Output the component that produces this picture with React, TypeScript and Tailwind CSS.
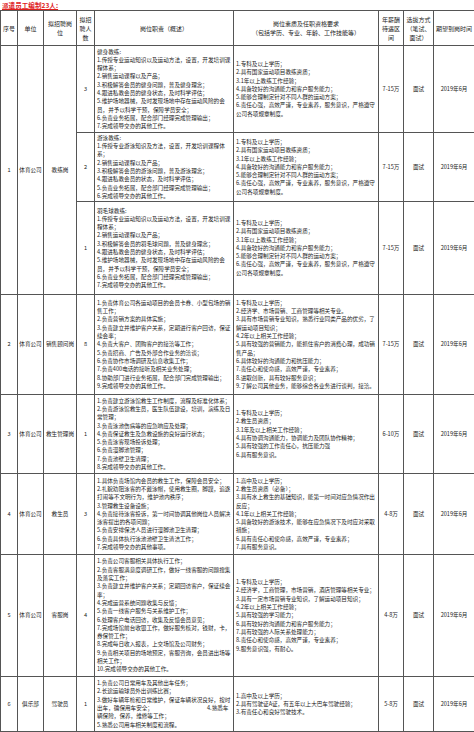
const coachReq = [
  '1.专科及以上学历；',
  '2.具有国家运动项目教练资质；',
  '3.1年以上教练工作经验；',
  '4.具备较好的沟通能力和客户服务能力；',
  '5.能够合理制定针对不同人群的运动方案；',
  '6.责任心强，高效严谨，专业素养，服务意识，严格遵守公司各项规章制度。',
];

const coaches = [
  {
    count: '3',
    h: 'h-[87px]',
    duty: [
      '健身教练:',
      '1.传授专业运动知识以及运动方法，设置，开发培训课程体系；',
      '2.销售运动课程以及产品；',
      '3.积极解答会员的健身问题，普及健身理念；',
      '4.跟进私教会员的健身状态，及时科学评估；',
      '5.维护场地器械，及时发现场地中存在运动风险的会员，并予以科学干预，保障学员安全；',
      '6.负责业务拓展，配合部门经理完成管理输出；',
      '7.完成领导交办的其他工作。',
    ],
  },
  {
    count: '2',
    h: 'h-[69px]',
    duty: [
      '游泳教练:',
      '1.传授专业游泳知识及方法，设置，开发培训课程体系；',
      '2.销售运动课程以及产品；',
      '3.积极解答会员的游泳问题，普及游泳理念；',
      '4.跟进私教会员的状态，及时科学评估；',
      '5.负责业务拓展，配合部门经理完成管理输出；',
      '6.完成领导交办的其他工作。',
    ],
  },
  {
    count: '1',
    h: 'h-[93px]',
    duty: [
      '羽毛球教练:',
      '1.传授专业运动知识以及运动方法，设置，开发培训课程体系；',
      '2.销售运动课程以及产品；',
      '3.积极解答会员的羽毛球问题，普及健身理念；',
      '4.跟进私教会员的健身状态，及时科学评估；',
      '5.维护场地器械，及时发现场地中存在运动风险的会员，并予以科学干预，保障学员安全；',
      '6.负责业务拓展，配合部门经理完成管理输出；',
      '7.完成领导交办的其他工作。',
    ],
  },
];

const jobs = [
  {
    no: '2', unit: '体育公司', post: '销售顾问岗', count: '8', pay: '7-15万', h: 'h-[100px]',
    duty: [
      '1.负责体育公司各运动项目的会员卡券、小型包场的销售工作；',
      '2.负责营销方案的具体实施；',
      '3.负责建立并维护客户关系，定期进行客户回访，保证续会率；',
      '4.负责大客户、团购客户的接洽等工作；',
      '5.负责招商、广告及外部合作业务的洽谈；',
      '6.负责协作市场调研及信息收集工作；',
      '7.负责400电话的接听及相关业务处理；',
      '8.协助部门进行业务拓展，配合部门完成管理输出；',
      '9.完成领导交办的其他工作。',
    ],
    req: [
      '1.专科及以上学历；',
      '2.经济学、市场营销、工商管理等相关专业。',
      '3.具有市场营销专业知识，熟悉行业同类产品的优劣，了解运动项目知识；',
      '4.2年以上相关工作经验；',
      '5.具有较强的营销能力，能抓住客户的消费心理，成功销售产品；',
      '6.具体较好的沟通能力和抗压能力；',
      '7.责任心和使命感，高效严谨，专业素养；',
      '8.进取创新，具有较好服务意识；',
      '9.了解公司其他业务，能够综合各业务进行谈判，接洽。',
    ],
  },
  {
    no: '3', unit: '体育公司', post: '救生管理岗', count: '1', pay: '6-10万', h: 'h-[79px]',
    duty: [
      '1.负责建立游泳馆救生工作制度，流程及标准化体系；',
      '2.负责游泳馆救生员，医生队伍建设，培训，演练及日常管理；',
      '3.负责泳池伤病等的应急响应及处理；',
      '4.负责保证救生及急救设施的良好运行状态；',
      '5.负责泳客现场投诉处理；',
      '6.负责漫脚池管理；',
      '7.负责池壁卫生清理；',
      '8.完成领导交办的其他工作。',
    ],
    req: [
      '1.专科及以上学历；',
      '2.救生员资质；',
      '3.1年及以上相关工作经验；',
      '4.具有协调沟通能力，协调能力及团队协作精神；',
      '5.具有较强的工作责任心，抗压能力强',
      '6.具有服务意识。',
    ],
  },
  {
    no: '4', unit: '体育公司', post: '救生员', count: '3', pay: '4-8万', h: 'h-[81px]',
    duty: [
      '1.具体负责场馆内会员的救生工作，保障会员安全；',
      '2.礼貌劝阻泳客的不戴泳帽，使用救生圈，脚蹼，追逐打闹等不文明行为，维护池内秩序；',
      '3.管理救生设备设施；',
      '4.负责接待泳客投诉，第一时间协调其他岗位人员解决泳客提出的各项问题；',
      '5.负责安排保洁人员进行漫脚池卫生清理；',
      '6.负责具体执行泳池池壁卫生清洁工作；',
      '7.完成领导交办的其他事项。',
    ],
    req: [
      '1.高中及以上学历；',
      '2.救生员资质（必备）；',
      '3.具有水上救生的基础知识，能第一时间对应急情况作出反应；',
      '4.1年以上相关工作经验；',
      '5.具备较好的游泳技术，能够在应急情况下及时应对采取措施；',
      '6.具有责任心和使命感，高效严谨，专业素养；',
      '7.具有服务意识。',
    ],
  },
  {
    no: '5', unit: '体育公司', post: '客服岗', count: '4', pay: '4-8万', h: 'h-[122px]',
    duty: [
      '1.负责公司客服相关具体执行工作；',
      '2.负责客服满意度调研工作，做好一线客服的问题搜集及落实工作；',
      '3.负责建立并维护客户关系；定期回访客户，保证续会率；',
      '4.完成运营系统问题收集与反馈；',
      '5.负责一线客户服务与关系维护工作；',
      '6.处理客户电话回访，收集及反馈会员意见；',
      '7.完成场馆前台收银工作，做好服务核对，钱财，卡，券保管工作；',
      '8.完成每日收入报表，上交场馆及公司财务；',
      '9.负责相关项目的场地预定，客服咨询，会员进出场等相关工作；',
      '10.完成领导交办的其他工作。',
    ],
    req: [
      '1.专科及以上学历；',
      '2.经济学，工商管理，市场营销，酒店管理等相关专业；',
      '3.具有一定市场营销专业知识，了解运动项目知识；',
      '4.2年以上相关工作经验；',
      '5.具有较强的学习能力；',
      '6.具有较好的沟通能力和客户服务能力；',
      '7.具有较强的人际关系处理能力；',
      '8.责任心和使命感，高效严谨，专业素养；',
      '9.服务意识强，有耐心。',
    ],
  },
];

const td = 'border border-[#555] px-[2px] align-middle';
const center = 'border border-[#555] px-0 align-middle text-center';

function Lines({ items }: { items: string[] }) {
  return (
    <>
      {items.map((t) => (
        <div key={t}>{t}</div>
      ))}
    </>
  );
}

export default function App() {
  return (
    <div className="w-[474px] bg-white text-[#1c1c1c] font-['Noto_Sans_CJK_SC','Noto_Sans',sans-serif] text-[5.6px] leading-[8.3px]">
      <div className="h-[10px] pl-[2px] pt-[1px] text-[6.6px] leading-[8px] font-bold text-[#e0201c] underline">
        派遣员工编制23人:
      </div>
      <table className="w-[474px] table-fixed border-collapse">
        <colgroup>
          <col className="w-[17px]" />
          <col className="w-[26px]" />
          <col className="w-[33px]" />
          <col className="w-[18px]" />
          <col className="w-[139px]" />
          <col className="w-[145px]" />
          <col className="w-[25px]" />
          <col className="w-[30px]" />
          <col className="w-[41px]" />
        </colgroup>
        <thead>
          <tr className="h-[35px] text-[6px] leading-[9px]">
            <th className={`${center} font-normal`}>序号</th>
            <th className={`${center} font-normal`}>单位</th>
            <th className={`${center} font-normal px-[3px]`}>拟招聘岗位</th>
            <th className={`${center} font-normal px-[2px]`}>拟招聘人数</th>
            <th className={`${center} font-normal`}>岗位职责（概述）</th>
            <th className={`${center} font-normal`}>
              岗位素质及任职资格要求
              <br />
              （包括学历、专业、年龄、工作技能等）
            </th>
            <th className={`${center} font-normal px-[2px]`}>年薪酬待遇区间</th>
            <th className={`${center} font-normal`}>选拔方式（笔试、面试）</th>
            <th className={`${center} font-normal`}>期望到岗时间</th>
          </tr>
        </thead>
        <tbody>
          {coaches.map((c, i) => (
            <tr key={c.duty[0]} className={c.h}>
              {i === 0 && (
                <>
                  <td rowSpan={3} className={center}>1</td>
                  <td rowSpan={3} className={center}>体育公司</td>
                  <td rowSpan={3} className={center}>教练岗</td>
                </>
              )}
              <td className={center}>{c.count}</td>
              <td className={td}><Lines items={c.duty} /></td>
              <td className={td}><Lines items={coachReq} /></td>
              <td className={center}>7-15万</td>
              <td className={center}>面试</td>
              <td className={center}>2019年6月</td>
            </tr>
          ))}
          {jobs.map((j) => (
            <tr key={j.no} className={j.h}>
              <td className={center}>{j.no}</td>
              <td className={center}>{j.unit}</td>
              <td className={center}>{j.post}</td>
              <td className={center}>{j.count}</td>
              <td className={td}><Lines items={j.duty} /></td>
              <td className={td}><Lines items={j.req} /></td>
              <td className={center}>{j.pay}</td>
              <td className={center}>面试</td>
              <td className={center}>2019年6月</td>
            </tr>
          ))}
          <tr className="h-[55px]">
            <td className={center}>6</td>
            <td className={center}>俱乐部</td>
            <td className={center}>驾驶员</td>
            <td className={center}>1</td>
            <td className={td}>
              <div>1.负责公司日常用车及其他出车任务；</div>
              <div>2.长途运输球员外出训练比赛；</div>
              <div>3.做好车辆年检和日常维护，保证车辆状况良好，按时</div>
              <div className="flex">
                <span className="w-[110px]">出车，确保用车安全；</span>
                <span>4.熟悉车</span>
              </div>
              <div>辆保险，保养，维修等工作；</div>
              <div>5.熟悉公司用车相关制度和流程。</div>
            </td>
            <td className={td}>
              <Lines
                items={[
                  '1.高中及以上学历；',
                  '2.具有驾驶证A证，有五年以上大巴车驾驶经验；',
                  '3.有责任心和良好驾驶技术。',
                ]}
              />
            </td>
            <td className={center}>5-8万</td>
            <td className={center}>面试</td>
            <td className={center}>2019年6月</td>
          </tr>
        </tbody>
      </table>
    </div>
  );
}
